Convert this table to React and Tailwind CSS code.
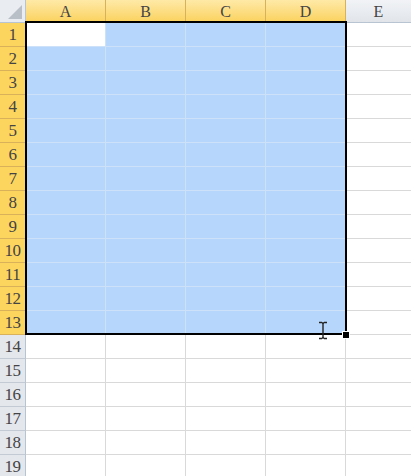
import React from 'react'

const cols = ['A', 'B', 'C', 'D', 'E']
const rows = Array.from({ length: 19 }, (_, i) => i + 1)

// selection covers A1:D13, A1 is the active cell
const inSel = (r, c) => r <= 13 && c <= 3

export default function App() {
    return (
        <div className="relative w-[411px] h-[476px] overflow-hidden bg-white text-[#444]" style={{ fontFamily: '"Liberation Serif", "DejaVu Serif", serif' }}>
            {/* column headers */}
            <div className="flex h-[23px]">
                <div className="relative w-[26px] shrink-0 bg-[#e9ecf0] border-r border-b border-[#b8c4d2]">
                    <div className="absolute right-[3px] bottom-[3px] w-0 h-0 border-l-[14px] border-l-transparent border-b-[14px] border-b-[#b9bfc7]" />
                </div>
                {cols.map((c, i) => (
                    <div
                        key={c}
                        className={
                            i <= 3
                                ? 'w-[80px] shrink-0 flex items-center justify-center pt-[1px] text-[16px] bg-gradient-to-b from-[#fee9a6] to-[#fbd25c] border-r border-b border-[#d8b15a]'
                                : 'flex-1 flex items-center justify-center pt-[1px] text-[16px] bg-gradient-to-b from-[#f1f3f6] to-[#e1e5ea] border-b border-[#b8c4d2]'
                        }
                    >
                        {c}
                    </div>
                ))}
            </div>

            {rows.map((r) => (
                <div key={r} className="flex h-[24px]">
                    <div
                        className={
                            r <= 13
                                ? 'w-[26px] shrink-0 flex items-center justify-center pt-[1px] text-[17px] tracking-[-0.5px] bg-[#fcd55f] border-r border-b border-r-[#b8c4d2] border-b-[#d8b15a]'
                                : 'w-[26px] shrink-0 flex items-center justify-center pt-[1px] text-[17px] tracking-[-0.5px] bg-[#e4e7ec] border-r border-b border-r-[#b8c4d2] border-b-[#c4cad3]'
                        }
                    >
                        {r}
                    </div>
                    {cols.map((c, i) => {
                        const sel = inSel(r, i)
                        const active = r === 1 && i === 0
                        let cls = i <= 3 ? 'w-[80px] shrink-0 border-r border-b ' : 'flex-1 border-b '
                        if (active) cls += 'bg-white border-[#cde2f8]'
                        else if (sel) cls += 'bg-[#b6d7fb] border-[#cde2f8]'
                        else cls += 'bg-white border-[#d9d9d9]'
                        return <div key={c} className={cls} />
                    })}
                </div>
            ))}

            {/* selection outline */}
            <div className="absolute left-[25px] top-[21px] w-[322px] h-[314px] border-2 border-black pointer-events-none" />
            {/* fill handle */}
            <div className="absolute left-[342px] top-[331px] w-[6px] h-[6px] bg-black border border-white box-content" />

            {/* I-beam cursor */}
            <svg className="absolute left-[317px] top-[321px]" width="12" height="19" viewBox="0 0 12 19">
                <path d="M2 1.5h3M7 1.5h3M6 2v15M2 17.5h3M7 17.5h3M5 2h2M5 17h2" stroke="#222" strokeWidth="1.4" fill="none" />
            </svg>
        </div>
    )
}
